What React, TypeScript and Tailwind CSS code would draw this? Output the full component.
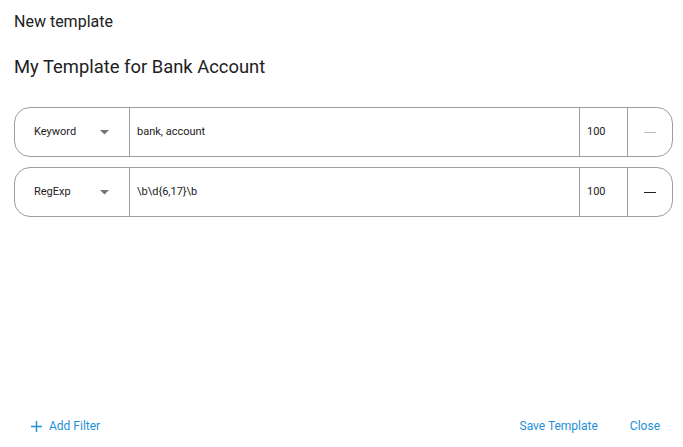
import React from "react";

function Row({ type, value, minusColor }: { type: string; value: string; minusColor: string }) {
  return (
    <div className="flex h-[50px] border border-[#9e9e9e] rounded-[16px] text-[11px] text-[#212121]">
      <div className="w-[114px] flex items-center pl-[19px] pr-[20px] justify-between pt-[1px]">
        <span>{type}</span>
        <svg width="9" height="5" viewBox="0 0 9 5"><path d="M0 0 L9 0 L4.5 4.5 Z" fill="#757575" /></svg>
      </div>
      <div className="flex-1 border-l border-[#9e9e9e] flex items-center pl-[7px] pt-[1px]">{value}</div>
      <div className="w-[48px] border-l border-[#9e9e9e] flex items-center pl-[7px] pt-[1px]">100</div>
      <div className="w-[45px] border-l border-[#9e9e9e] flex items-center justify-center">
        <div className={`w-[12px] h-[1px] ${minusColor}`} />
      </div>
    </div>
  );
}

export default function App() {
  return (
    <div className="w-[683px] h-[447px] bg-white flex flex-col" style={{ fontFamily: "Roboto, 'Liberation Sans', sans-serif" }}>
      <div className="px-[14px] pt-[12px] text-[16px] text-[#212121] leading-[20px]">New template</div>
      <div className="px-[14px] pt-[23px] text-[18.4px] text-[#212121] leading-[24px]">My Template for Bank Account</div>
      <div className="pl-[14px] pr-[10px] mt-[28px] flex flex-col gap-[10px]">
        <Row type="Keyword" value="bank, account" minusColor="bg-[#bdbdbd]" />
        <Row type="RegExp" value="\b\d{6,17}\b" minusColor="bg-[#212121]" />
      </div>
      <div className="flex-1" />
      <div className="flex items-center h-[20px] mb-[11px] text-[12px] text-[#1e8fd8]">
        <div className="flex items-center ml-[31px] gap-[7px]">
          <svg width="11" height="11" viewBox="0 0 11 11"><path d="M5.5 0 V11 M0 5.5 H11" stroke="#1e8fd8" strokeWidth="1.4" /></svg>
          <span>Add Filter</span>
        </div>
        <div className="flex-1" />
        <span className="mr-[32px]">Save Template</span>
        <span className="mr-[23px]">Close</span>
      </div>
    </div>
  );
}
